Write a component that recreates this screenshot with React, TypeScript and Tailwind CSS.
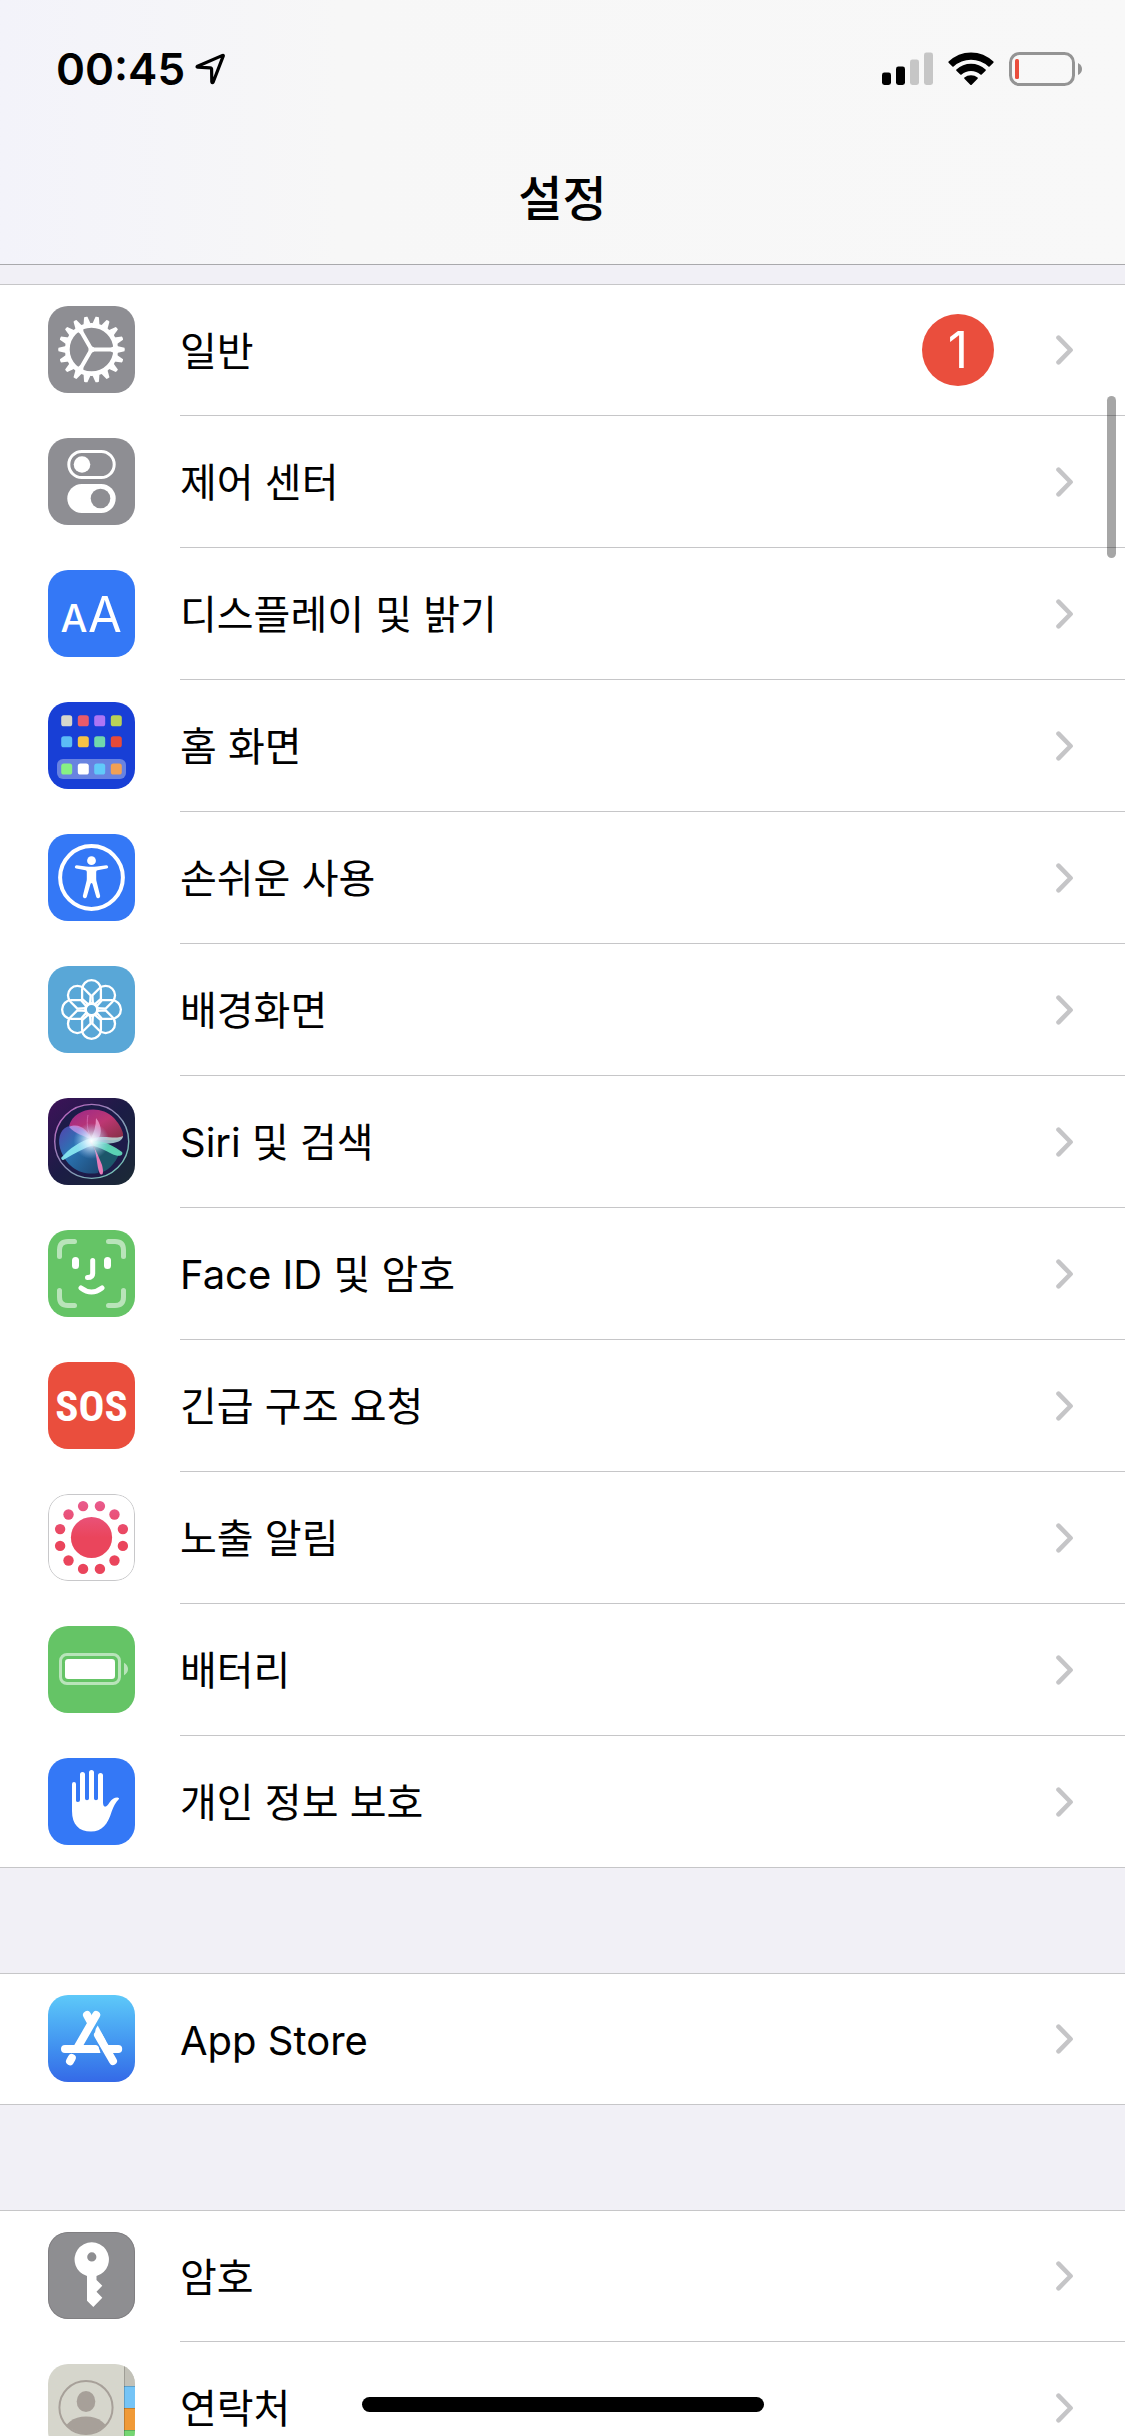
import type { ReactNode } from "react";

type SettingItem = {
  label: string;
  icon: ReactNode;
  badge?: number;
};

/* ---------- App icons (87 x 87 grid) ---------- */

function Tile({ className = "", children }: { className?: string; children: ReactNode }) {
  return (
    <svg
      viewBox="0 0 87 87"
      fill="none"
      aria-hidden="true"
      className={`size-[87px] shrink-0 rounded-[20px] ${className}`}
    >
      {children}
    </svg>
  );
}

const teeth = Array.from({ length: 18 }, (_, i) => i * 20);
const petals = Array.from({ length: 8 }, (_, i) => i * 45);
const dots = Array.from({ length: 12 }, (_, i) => i * 30 + 15);

function GeneralIcon() {
  return (
    <Tile className="bg-[#8e8e93]">
      <g transform="translate(43.5 43.5)">
        <circle r="24.2" stroke="#fff" strokeWidth="4.8" />
        {teeth.map((deg) => (
          <path key={deg} d="M25.5 -3.6L33 -1.7Q33.6 0 33 1.7L25.5 3.6Z" fill="#fff" transform={`rotate(${deg})`} />
        ))}
        {[0, 120, 240].map((deg) => (
          <path key={deg} d="M0 -2H19Q21 -2 23 -4.5V4.5Q21 2 19 2H0Z" fill="#fff" transform={`rotate(${deg})`} />
        ))}
        <circle r="3" fill="#fff" />
      </g>
    </Tile>
  );
}

function ControlCenterIcon() {
  return (
    <Tile className="bg-[#8e8e93]">
      <rect x="20.8" y="13.5" width="45.4" height="26" rx="13" stroke="#fff" strokeWidth="3" />
      <circle cx="34" cy="26.5" r="8.3" fill="#fff" />
      <rect x="19.3" y="46" width="48.4" height="29" rx="14.5" fill="#fff" />
      <circle cx="52.5" cy="60.5" r="9.8" fill="#8e8e93" />
    </Tile>
  );
}

function DisplayIcon() {
  return (
    <Tile className="bg-[#3478f6] font-['Inter',sans-serif] font-medium">
      <text x="26" y="62" fontSize="38" textAnchor="middle" fill="#fff">A</text>
      <text x="57" y="62" fontSize="49" textAnchor="middle" fill="#fff" className="font-normal">A</text>
    </Tile>
  );
}

const homeColumns = [13.2, 29.8, 46.2, 62.8];
const homeRows = [
  { y: 13.3, colors: ["#d6d6cc", "#ea5b6a", "#ad75f5", "#b9d157"] },
  { y: 34.3, colors: ["#5bbcf6", "#f6c244", "#71d8ac", "#e84a39"] },
  { y: 61.5, colors: ["#87f184", "#ffffff", "#61cafa", "#f0a055"] },
];

function HomeScreenIcon() {
  return (
    <Tile className="bg-[#183fd6]">
      <rect x="9" y="57" width="69" height="20" rx="6" fill="#6883e1" />
      {homeRows.map((row) =>
        row.colors.map((color, i) => (
          <rect key={color} x={homeColumns[i]} y={row.y} width="11" height="11" rx="2.6" fill={color} />
        ))
      )}
    </Tile>
  );
}

function AccessibilityIcon() {
  return (
    <Tile className="bg-[#3478f6]">
      <circle cx="43.5" cy="43.5" r="31.4" stroke="#fff" strokeWidth="4" />
      <circle cx="43.5" cy="26.7" r="4.4" fill="#fff" />
      <path
        d="M28.6 31.3L38 32.6Q43.5 33 49 32.6L58.4 31.3Q60 31.4 60.2 32.9Q60.1 34.3 58.8 34.6L49.5 36.3Q48.2 36.6 48.2 38V45Q48.2 46.5 48.7 48L52.2 62Q52.2 64 50.5 64.3Q48.8 64.5 48.2 62.8L44.5 50Q43.5 48 42.5 50L38.8 62.8Q38.2 64.5 36.5 64.3Q34.8 64 34.8 62L38.3 48Q38.8 46.5 38.8 45V38Q38.8 36.6 37.5 36.3L28.2 34.6Q26.9 34.3 26.8 32.9Q27 31.4 28.6 31.3Z"
        fill="#fff"
      />
    </Tile>
  );
}

function WallpaperIcon() {
  return (
    <Tile className="bg-[#59a7d7]">
      <g transform="translate(43.5 43.5)" stroke="#fff" strokeWidth="2.3" strokeLinejoin="round">
        {petals.map((deg) => (
          <path
            key={deg}
            d="M-3 -5L-9.4 -10.6V-20A9.4 9.4 0 0 1 9.4 -20V-10.6L3 -5"
            transform={`rotate(${deg})`}
          />
        ))}
        <circle r="6" strokeWidth="2.8" />
      </g>
    </Tile>
  );
}

function SiriIcon() {
  return (
    <Tile>
      <defs>
        <linearGradient id="siri-bg" x1="0" y1="0" x2="1" y2="1">
          <stop offset="0" stopColor="#3e1259" />
          <stop offset="0.5" stopColor="#1b1c45" />
          <stop offset="1" stopColor="#1b2a35" />
        </linearGradient>
        <linearGradient id="siri-ring" x1="0" y1="0" x2="1" y2="1">
          <stop offset="0" stopColor="#c65cc0" />
          <stop offset="0.5" stopColor="#8a8fb5" />
          <stop offset="1" stopColor="#6fd3b5" />
        </linearGradient>
        <linearGradient id="siri-top" x1="0" y1="0" x2="1" y2="1">
          <stop offset="0" stopColor="#a62a92" />
          <stop offset="0.5" stopColor="#cf3a78" />
          <stop offset="1" stopColor="#8a3040" />
        </linearGradient>
        <linearGradient id="siri-low" x1="0" y1="0" x2="1" y2="1">
          <stop offset="0" stopColor="#5a48b8" />
          <stop offset="0.4" stopColor="#2c7fc0" />
          <stop offset="1" stopColor="#1e4d78" />
        </linearGradient>
        <radialGradient id="siri-glow">
          <stop offset="0" stopColor="#fff" />
          <stop offset="0.3" stopColor="#e6f4ff" stopOpacity="0.8" />
          <stop offset="1" stopColor="#9fc8ff" stopOpacity="0" />
        </radialGradient>
      </defs>
      <rect width="87" height="87" fill="url(#siri-bg)" />
      <circle cx="43.7" cy="43.4" r="37" fill="#1d1b49" stroke="url(#siri-ring)" strokeWidth="1.4" />
      <path d="M21 28C26 10 52 6 66 20C74 29 78 39 73 41C62 44 48 40 43 43C38 38 24 36 21 28Z" fill="url(#siri-top)" opacity="0.9" />
      <path d="M12 50C9 38 14 29 22 28C36 29 41 37 43 43C47 54 54 66 50 75C34 78 18 70 12 50Z" fill="url(#siri-low)" opacity="0.9" />
      <path d="M45 44C56 46 64 50 72 54C67 67 59 73 52 75Z" fill="#1d6f79" opacity="0.7" />
      <path d="M21 29C31 24 40 32 45 43C36 37 27 36 21 29Z" fill="#cf9cf0" opacity="0.7" />
      <path d="M42 42C46 35 48 28 48 20C55 29 54 38 48 43Z" fill="#f6a8d8" opacity="0.75" />
      <path d="M40 17C38 27 40 36 45 43" stroke="#e57fc7" strokeWidth="1" opacity="0.6" />
      <path d="M43 41C56 36 66 42 75 38C74 46 60 46 46 46Z" fill="#c4f3ee" opacity="0.75" />
      <path d="M44 40C32 43 22 50 13 60C14 62 15 63 17 61C27 55 36 50 46 47Z" fill="#8cecf3" opacity="0.9" />
      <path d="M43 43C56 42 66 48 74 54C76 58 70 59 64 56C57 52 50 49 43 47Z" fill="#63e0bc" opacity="0.9" />
      <path d="M41 43C47 49 50 57 54 67C56 75 55 78 52 76C48 68 50 55 43 43Z" fill="#f07cbc" opacity="0.95" />
      <circle cx="43.5" cy="43" r="18" fill="url(#siri-glow)" />
    </Tile>
  );
}

function FaceIdIcon() {
  return (
    <Tile className="bg-[#65c466]">
      <g stroke="#fff" strokeWidth="5" strokeLinecap="round">
        <path
          d="M11.5 26.5V20Q11.5 11.5 20 11.5H26.5M60.5 11.5H67Q75.5 11.5 75.5 20V26.5M75.5 60.5V67Q75.5 75.5 67 75.5H60.5M26.5 75.5H20Q11.5 75.5 11.5 67V60.5"
          opacity="0.55"
        />
        <path d="M44.7 30.5V43.5Q44.7 47.6 39.5 47.6M33 58Q43.5 66 54 58" />
      </g>
      <rect x="24" y="27" width="7" height="12" rx="3.5" fill="#fff" />
      <rect x="56" y="27" width="7" height="12" rx="3.5" fill="#fff" />
    </Tile>
  );
}

function SosIcon() {
  return (
    <Tile className="bg-[#ea4e3d] font-['Liberation_Sans_Narrow','Roboto_Condensed',sans-serif] font-bold">
      <text x="43.5" y="59" fontSize="43" textAnchor="middle" fill="#fff">SOS</text>
    </Tile>
  );
}

function ExposureIcon() {
  return (
    <Tile className="bg-white">
      <defs>
        <linearGradient id="exposure" gradientUnits="userSpaceOnUse" x1="0" y1="-36" x2="0" y2="36">
          <stop offset="0" stopColor="#e95b8d" />
          <stop offset="0.5" stopColor="#ea455c" />
          <stop offset="1" stopColor="#ea455c" />
        </linearGradient>
      </defs>
      <rect x="0.5" y="0.5" width="86" height="86" rx="19.5" stroke="#c8c8ca" />
      <g transform="translate(43.5 43.5)" fill="url(#exposure)">
        <circle r="20.6" />
        {dots.map((deg) => (
          <circle
            key={deg}
            cx={32.5 * Math.cos((deg * Math.PI) / 180)}
            cy={32.5 * Math.sin((deg * Math.PI) / 180)}
            r="5.2"
          />
        ))}
      </g>
    </Tile>
  );
}

function BatteryIcon() {
  return (
    <Tile className="bg-[#65c466]">
      <rect x="12.5" y="28.5" width="59" height="29" rx="6.5" stroke="#fff" strokeWidth="3" opacity="0.55" />
      <rect x="17" y="33" width="50" height="20" rx="3.2" fill="#fff" />
      <path d="M76 36.7Q80 39 80 43T76 49.3Z" fill="#fff" opacity="0.55" />
    </Tile>
  );
}

function PrivacyIcon() {
  return (
    <Tile className="bg-[#3478f6]">
      <path
        d="M24 26A2 2 0 0 1 28 26V42.5Q28 44 30 44Q32 44 32 42V16.5A2.5 2.5 0 0 1 37 16.5V40.5Q37 42.3 39 42.3Q41 42.3 41 40.5V14.5A2.5 2.5 0 0 1 46 14.5V40.5Q46 42.3 48 42.3Q50 42.3 50 40.5V17.5A2.5 2.5 0 0 1 55 17.5V44Q55 49 57.5 48.6Q59 48.3 61.5 44.5Q65 39.2 69.5 39.4Q72 39.8 70.5 41.5Q66.5 45.5 63.5 54C60 66 54 73.6 43 73.6C31 73.6 24 66.5 24 53Z"
        fill="#fff"
      />
    </Tile>
  );
}

function AppStoreIcon() {
  return (
    <Tile className="bg-linear-to-b from-[#5ec9f9] to-[#3569e7]">
      <g stroke="#fff" strokeWidth="8" strokeLinecap="round">
        <path d="M39 20L42 25.5M17 54H47M70.2 54H60M65 66L50 40" />
        <path d="M48.2 20L29.5 52.5" />
        <path d="M23.8 63L22 66.2" />
      </g>
      <path d="M49.7 30.5L58 46L51 45L47.6 39.5Q46 35.5 49.7 30.5Z" fill="#fff" />
      <path d="M47 50Q51 51 52.5 58H47Z" fill="#fff" />
    </Tile>
  );
}

function PasswordsIcon() {
  return (
    <Tile className="bg-[#8e8e91]">
      <rect x="0.5" y="0.5" width="86" height="86" rx="19.5" stroke="#807f82" />
      <path
        fillRule="evenodd"
        d="M39 44A17.2 17.2 0 1 1 48.5 44V48L54.3 53.7L48.5 59.7L54.3 65.7L45.3 75L39 68.7ZM43.8 20.3A4.6 4.6 0 1 0 43.8 29.5A4.6 4.6 0 1 0 43.8 20.3Z"
        fill="#fff"
      />
    </Tile>
  );
}

function ContactsIcon() {
  return (
    <Tile className="bg-[#d6d6cc]">
      <defs>
        <clipPath id="contact-circle">
          <circle cx="38" cy="43.5" r="26" />
        </clipPath>
      </defs>
      <rect x="76" width="11" height="22" fill="#c2c1b8" />
      <rect x="76" y="22" width="11" height="22" fill="#75c4f6" />
      <rect x="76" y="44" width="11" height="22" fill="#f09a37" />
      <rect x="76" y="66" width="11" height="21" fill="#75d672" />
      <path d="M76 22.5H87M76 44.5H87M76 66.5H87M76.5 0V87" stroke="#000" opacity="0.18" />
      <circle cx="38" cy="43.5" r="26.6" stroke="#a7a099" strokeWidth="2" />
      <ellipse cx="38" cy="37.5" rx="9.3" ry="10.6" fill="#a7a099" />
      <ellipse cx="38" cy="70" rx="23" ry="17.5" fill="#a7a099" clipPath="url(#contact-circle)" />
    </Tile>
  );
}

/* ---------- Data ---------- */

const groups: SettingItem[][] = [
  [
    { label: "일반", icon: <GeneralIcon />, badge: 1 },
    { label: "제어 센터", icon: <ControlCenterIcon /> },
    { label: "디스플레이 및 밝기", icon: <DisplayIcon /> },
    { label: "홈 화면", icon: <HomeScreenIcon /> },
    { label: "손쉬운 사용", icon: <AccessibilityIcon /> },
    { label: "배경화면", icon: <WallpaperIcon /> },
    { label: "Siri 및 검색", icon: <SiriIcon /> },
    { label: "Face ID 및 암호", icon: <FaceIdIcon /> },
    { label: "긴급 구조 요청", icon: <SosIcon /> },
    { label: "노출 알림", icon: <ExposureIcon /> },
    { label: "배터리", icon: <BatteryIcon /> },
    { label: "개인 정보 보호", icon: <PrivacyIcon /> },
  ],
  [{ label: "App Store", icon: <AppStoreIcon /> }],
  [
    { label: "암호", icon: <PasswordsIcon /> },
    { label: "연락처", icon: <ContactsIcon /> },
  ],
];

/* ---------- Layout ---------- */

function StatusBar() {
  return (
    <div className="flex h-[138px] items-center justify-between pr-[43px] pl-14">
      <div className="flex items-center gap-2.5">
        <time className="text-[44px] leading-none font-semibold">00:45</time>
        <svg width="30" height="32" viewBox="0 0 30 32" fill="none" aria-label="Location">
          <path
            d="M27.6 2.4L2.6 13.2Q1.4 14 2.8 14.2L15.2 14.8Q16.6 14.9 16.6 16.3L16.8 28.8Q17.2 30.4 18.2 29L28.2 3.2Q28.6 2 27.6 2.4Z"
            stroke="#000"
            strokeWidth="3.2"
            strokeLinejoin="round"
          />
        </svg>
      </div>
      <div className="flex items-center gap-[15px]">
        <svg width="51" height="34" viewBox="0 0 51 34" aria-label="Signal">
          <rect y="20.5" width="9" height="12.5" rx="2.4" />
          <rect x="14" y="14.5" width="9" height="18.5" rx="2.4" />
          <rect x="28" y="7.5" width="9" height="25.5" rx="2.4" fill="#c6c6c6" />
          <rect x="42" y="0.5" width="9" height="32.5" rx="2.4" fill="#c6c6c6" />
        </svg>
        <svg width="46" height="34" viewBox="0 0 46 34" aria-label="Wi-Fi">
          <path d="M0.6 9.6Q10 0.4 23 0.4T45.4 9.6Q46 10.2 45.4 10.8L41.6 14.6Q41 15.1 40.4 14.6Q33 7.8 23 7.8T5.6 14.6Q5 15.1 4.4 14.6L0.6 10.8Q0 10.2 0.6 9.6Z" />
          <path d="M8.4 17.5Q14.7 11.7 23 11.7T37.6 17.5Q38.2 18.1 37.6 18.7L33.7 22.5Q33 23 32.4 22.5Q28.5 19 23 19T13.6 22.5Q13 23 12.3 22.5L8.4 18.7Q7.8 18.1 8.4 17.5Z" />
          <path d="M16.4 25.6Q19.2 23.3 23 23.3T29.6 25.6Q30.2 26.2 29.6 26.8L23.7 32.7Q23 33.3 22.3 32.7L16.4 26.8Q15.8 26.2 16.4 25.6Z" />
        </svg>
        <svg width="73" height="34" viewBox="0 0 73 34" fill="none" aria-label="Battery">
          <rect x="1.5" y="1.5" width="63" height="31" rx="9" stroke="#949494" strokeWidth="3" />
          <rect x="6" y="7" width="4" height="20" rx="1.5" fill="#ea4e3d" />
          <path d="M69 11Q73 13 73 17T69 23Z" fill="#949494" />
        </svg>
      </div>
    </div>
  );
}

function Chevron() {
  return (
    <svg width="17" height="30" viewBox="0 0 17 30" fill="none" aria-hidden="true">
      <path d="M2.5 2.7L14.6 15L2.5 27.3" stroke="#c5c5c7" strokeWidth="4.6" strokeLinecap="round" strokeLinejoin="round" />
    </svg>
  );
}

function SettingRow({ item }: { item: SettingItem }) {
  return (
    <li className="group border-[#c6c6c8] first:border-t last:border-b">
      <a href="#" className="flex h-33 items-stretch pl-12 group-first:h-[131px] group-last:h-[131px] group-only:h-[130px]">
        <span className="pt-[22px] group-first:pt-[21px]">{item.icon}</span>
        <span className="ml-[45px] flex flex-1 items-center justify-between border-b border-[#c6c6c8] pr-[52px] group-last:border-b-0">
          <span className="pt-[3px] text-[40px] leading-none whitespace-nowrap">{item.label}</span>
          <span className="flex items-center gap-[62px]">
            {item.badge && (
              <span className="flex size-18 items-center justify-center rounded-full bg-[#ea4e3d] text-[50px] leading-none font-normal text-white">
                {item.badge}
              </span>
            )}
            <Chevron />
          </span>
        </span>
      </a>
    </li>
  );
}

export default function App() {
  return (
    <div
      lang="ko"
      className="relative flex h-screen w-full flex-col overflow-hidden bg-[#f1f0f6] font-['Inter','Noto_Sans_CJK_KR',sans-serif] text-black"
    >
      <header className="shrink-0 border-b border-[#a9a9ac] bg-[#f8f8f8] bg-linear-to-r from-[#f3f3fa] via-[#f7f7f7] via-30% to-[#f8f8f8]">
        <StatusBar />
        <h1 className="flex h-[126px] items-center justify-center pb-1 text-[48px] leading-none font-medium">설정</h1>
      </header>

      <main className="relative flex min-h-0 flex-1 flex-col gap-[105px] overflow-hidden pt-[19px]">
        {groups.map((items) => (
          <ul key={items[0].label} className="shrink-0 bg-white">
            {items.map((item) => (
              <SettingRow key={item.label} item={item} />
            ))}
          </ul>
        ))}
        {/* scroll indicator */}
        <div className="absolute top-[131px] right-[9px] h-[162px] w-[9px] rounded-full bg-black/35" />
      </main>

      {/* home indicator */}
      <div className="absolute bottom-6 left-1/2 h-[15px] w-[402px] -translate-x-1/2 rounded-full bg-black" />
    </div>
  );
}
